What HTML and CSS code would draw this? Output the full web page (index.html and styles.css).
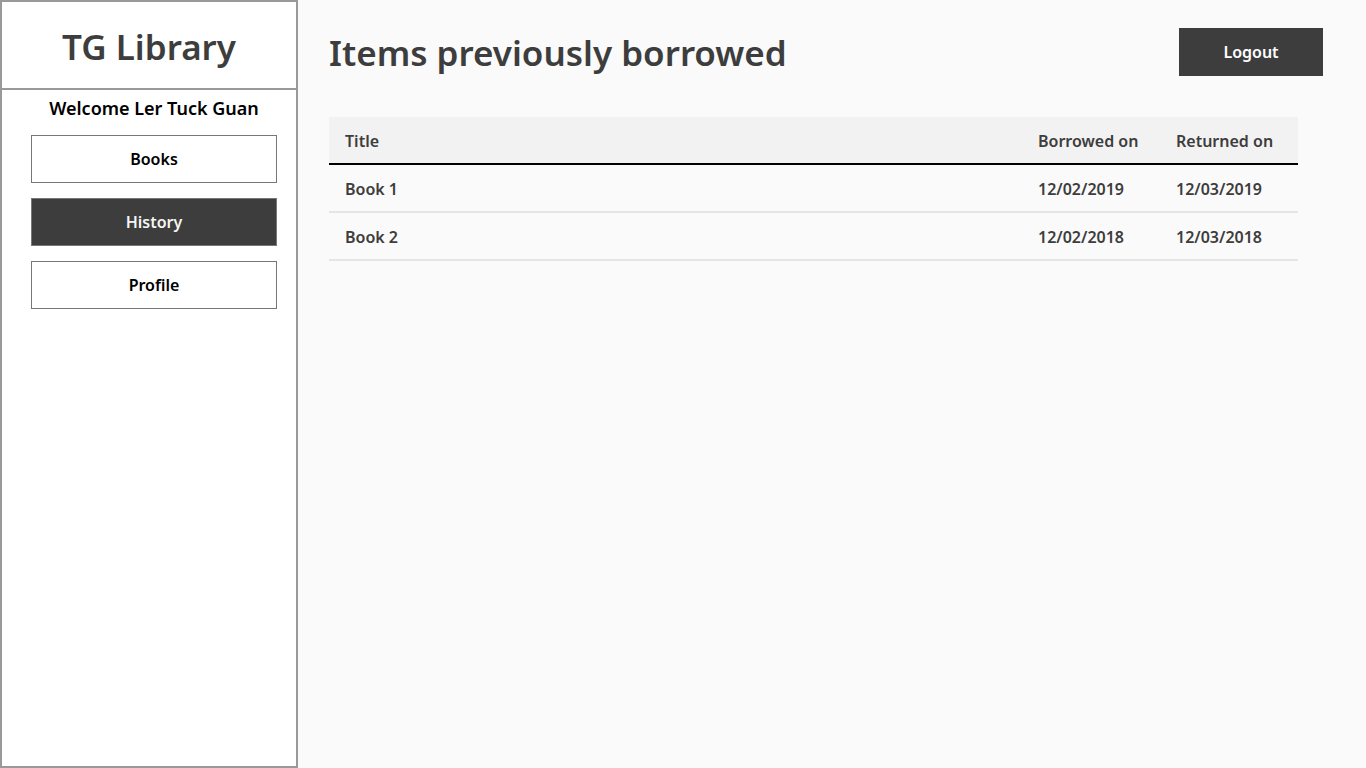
FILE: index.html
```html
<!DOCTYPE html>
<html>
<head>
<meta charset="utf-8">
<link rel="stylesheet" href="styles.css">
</head>
<body>
<div class="app">
  <aside class="sidebar">
    <div class="brand">TG Library</div>
    <div class="menu">
      <div class="welcome">Welcome Ler Tuck Guan</div>
      <nav class="nav">
        <a class="nav-btn">Books</a>
        <a class="nav-btn active">History</a>
        <a class="nav-btn">Profile</a>
      </nav>
    </div>
  </aside>
  <main class="main">
    <header class="top">
      <h1 class="heading">Items previously borrowed</h1>
      <button class="logout">Logout</button>
    </header>
    <table class="history">
      <thead>
        <tr><th>Title</th><th class="date">Borrowed on</th><th class="date">Returned on</th></tr>
      </thead>
      <tbody>
        <tr><td>Book 1</td><td>12/02/2019</td><td>12/03/2019</td></tr>
        <tr><td>Book 2</td><td>12/02/2018</td><td>12/03/2018</td></tr>
      </tbody>
    </table>
  </main>
</div>
</body>
</html>
```
FILE: styles.css
```css
* { box-sizing: border-box; }
html, body { margin: 0; height: 100%; }
body {
  font-family: "Noto Sans", "Open Sans", sans-serif;
  background: #fafafa;
  color: #3d3d3d;
}
.app {
  display: flex;
  height: 768px;
}
.sidebar {
  width: 298px;
  flex: none;
  background: #fff;
  border: 2px solid #999;
  display: flex;
  flex-direction: column;
}
.brand {
  height: 88px;
  border-bottom: 2px solid #999;
  display: flex;
  align-items: center;
  justify-content: center;
  font-size: 35px;
  font-weight: 600;
  color: #3d3d3d;
  padding-top: 3px;
}
.menu {
  padding: 0 19px 0 29px;
}
.welcome {
  text-align: center;
  font-size: 18px;
  font-weight: 600;
  color: #000;
  margin-top: 5px;
  line-height: 26px;
  white-space: nowrap;
}
.nav {
  display: flex;
  flex-direction: column;
  gap: 15px;
  margin-top: 14px;
}
.nav-btn {
  height: 48px;
  border: 1px solid #777;
  display: flex;
  align-items: center;
  justify-content: center;
  font-size: 16px;
  font-weight: 600;
  color: #000;
  background: #fff;
}
.nav-btn.active {
  background: #3d3d3d;
  color: #f5f5f5;
}
.main {
  flex: 1;
  padding: 28px 43px 0 31px;
}
.top {
  display: flex;
  justify-content: space-between;
  align-items: flex-start;
}
.heading {
  margin: 0;
  font-size: 35px;
  font-weight: 600;
  line-height: 50px;
  color: #3d3d3d;
}
.logout {
  width: 144px;
  height: 48px;
  border: none;
  background: #3d3d3d;
  color: #fff;
  font-family: inherit;
  font-size: 16px;
  font-weight: 600;
}
.history {
  margin-top: 39px;
  width: 969px;
  border-collapse: separate;
  border-spacing: 0;
  font-size: 16px;
  font-weight: 600;
  color: #3d3d3d;
}
.history th, .history td {
  text-align: left;
  padding: 2px 16px 0;
  height: 48px;
}
.history th {
  background: #f2f2f2;
  border-bottom: 2px solid #000;
  font-weight: 600;
}
.history td {
  border-bottom: 2px solid #e5e5e5;
}
.history .date { width: 138px; }
```
